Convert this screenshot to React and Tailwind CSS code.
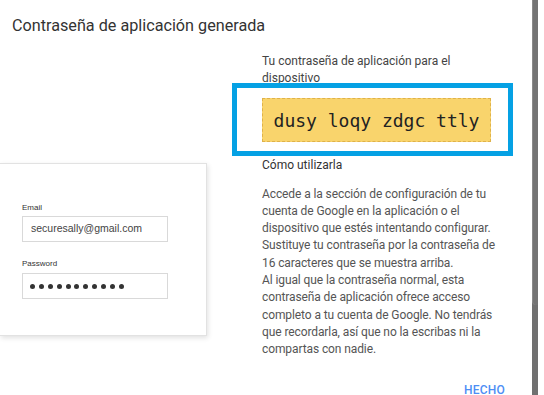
export default function App() {
  const dots = Array.from({ length: 11 });

  return (
    <div className="w-[544px] h-[395px] overflow-hidden bg-white flex font-['Roboto',sans-serif]">
      {/* Dialog content */}
      <div className="flex-1 flex flex-col">
        <h1 className="pl-3 pt-[14px] text-[16.2px] leading-6 text-[#333]">
          Contraseña de aplicación generada
        </h1>

        <div className="flex">
          {/* Left: sample login card */}
          <div className="w-[262px] pt-[125px]">
            <div className="w-[207px] h-[173px] bg-white border border-l-0 border-[#e2e2e2] shadow-[1px_2px_5px_rgba(0,0,0,0.12)] pl-[22px] pt-[39px] font-['Liberation_Sans',Arial,sans-serif]">
              <div className="text-[8px] leading-[10px] text-[#333]">Email</div>
              <div className="mt-[3px] w-[146px] h-[26px] border border-[#d9d9d9] flex items-center pl-[8px] text-[10.5px] text-[#444]">
                securesally@gmail.com
              </div>
              <div className="mt-[17px] text-[8px] leading-[10px] text-[#333]">Password</div>
              <div className="mt-[4px] w-[146px] h-[26px] border border-[#d9d9d9] flex items-center gap-[3.9px] pl-[7px]">
                {dots.map((_, i) => (
                  <span key={i} className="w-[5px] h-[5px] rounded-full bg-[#333]" />
                ))}
              </div>
            </div>
          </div>

          {/* Right: password + instructions */}
          <div className="w-[246px] pt-[15px] flex flex-col">
            <p className="text-[12px] leading-[17px] text-[#444]">
              Tu contraseña de aplicación para el dispositivo
            </p>

            <div className="relative mt-[11px] w-[229px] h-[44px] bg-[#f9d46c] border border-dashed border-[#dfb24a] flex items-center justify-center">
              <span className="font-['DejaVu_Sans_Mono',monospace] text-[18px] text-[#222]">
                dusy loqy zdgc ttly
              </span>
              {/* highlight frame */}
              <div className="absolute -left-[31px] -right-[23px] -top-[16px] -bottom-[15px] border-[5px] border-[#05a1e4]" />
            </div>

            <p className="mt-[14.5px] text-[12px] leading-[17px] text-[#333]">Cómo utilizarla</p>

            <p className="mt-[12px] text-[12px] leading-[17.3px] tracking-[-0.1px] text-[#555]">
              Accede a la sección de configuración de tu cuenta de Google en la aplicación o el
              dispositivo que estés intentando configurar. Sustituye tu contraseña por la
              contraseña de 16 caracteres que se muestra arriba.
              <br />
              Al igual que la contraseña normal, esta contraseña de aplicación ofrece acceso
              completo a tu cuenta de Google. No tendrás que recordarla, así que no la escribas
              ni la compartas con nadie.
            </p>

            <div className="mt-[24px] pr-[3px] flex justify-end">
              <button className="text-[12px] leading-4 font-medium tracking-[0.2px] text-[#4d8ef5]">
                HECHO
              </button>
            </div>
          </div>
        </div>
      </div>

      {/* Scrollbar */}
      <div className="w-[6px] bg-[#707070] flex flex-col">
        <div className="h-[305px] border-l border-[#8a8a8a] rounded-bl-[4px] bg-[#747474]" />
      </div>
      <div className="w-[6px] bg-white" />
    </div>
  );
}
